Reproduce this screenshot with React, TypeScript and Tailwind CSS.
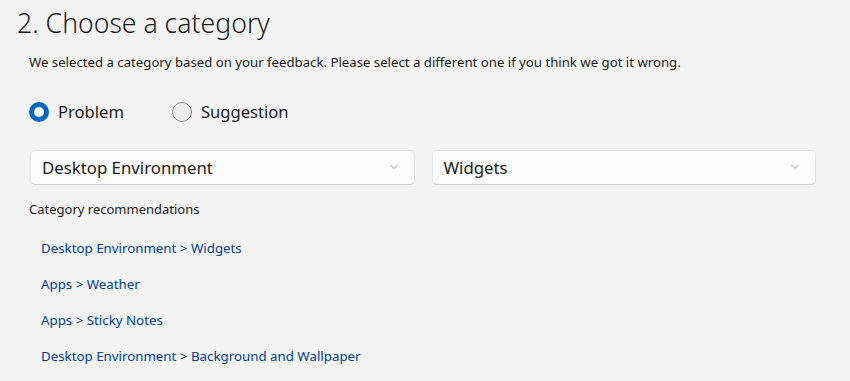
import { ChevronDown } from 'lucide-react';

const recs = [
  'Desktop Environment > Widgets',
  'Apps > Weather',
  'Apps > Sticky Notes',
  'Desktop Environment > Background and Wallpaper',
];

function Radio({ label, checked }: { label: string; checked?: boolean }) {
  return (
    <label className="flex items-center gap-[9px]">
      {checked ? (
        <span className="h-5 w-5 rounded-full bg-[#0067c0] flex items-center justify-center">
          <span className="h-[10px] w-[10px] rounded-full bg-white" />
        </span>
      ) : (
        <span className="h-5 w-5 rounded-full border border-[#8a8a8a] bg-[#ececec]" />
      )}
      <span className="text-[16.6px] text-[#1b1b1b]">{label}</span>
    </label>
  );
}

function Select({ value }: { value: string }) {
  return (
    <div className="flex-1 h-[35px] flex items-center justify-between pl-[11px] pr-[14px] rounded-[5px] bg-[#fbfbfb] border border-[#e5e5e5] border-b-[#d0d0d0]">
      <span className="text-[16.8px] text-[#1b1b1b]">{value}</span>
      <ChevronDown className="h-3 w-3 text-[#606060]" strokeWidth={1.25} />
    </div>
  );
}

export default function App() {
  return (
    <div className="w-[850px] h-[381px] bg-[#f3f3f3] overflow-hidden" style={{ fontFamily: '"Noto Sans", sans-serif' }}>
      <div className="pl-[17px] pt-[3px]">
        <h1 className="text-[26.6px] font-light text-[#1b1b1b] leading-[40px]">2. Choose a category</h1>
      </div>
      <div className="pl-[29px] pr-[34px]">
        <p className="mt-[10px] text-[13.2px] text-[#1b1b1b] leading-[18px]">
          We selected a category based on your feedback. Please select a different one if you think we got it wrong.
        </p>
        <div className="mt-[29px] flex items-center gap-[48px]">
          <Radio label="Problem" checked />
          <Radio label="Suggestion" />
        </div>
        <div className="mt-[25px] flex gap-[17px] pl-[1px]">
          <Select value="Desktop Environment" />
          <Select value="Widgets" />
        </div>
        <p className="mt-[15px] text-[13px] text-[#1b1b1b] leading-[18px]">Category recommendations</p>
        <div className="mt-[21px] pl-[12px] flex flex-col gap-[18px]">
          {recs.map((r) => (
            <a key={r} className="text-[13.3px] text-[#003e92] leading-[18px] cursor-pointer">{r}</a>
          ))}
        </div>
      </div>
    </div>
  );
}
